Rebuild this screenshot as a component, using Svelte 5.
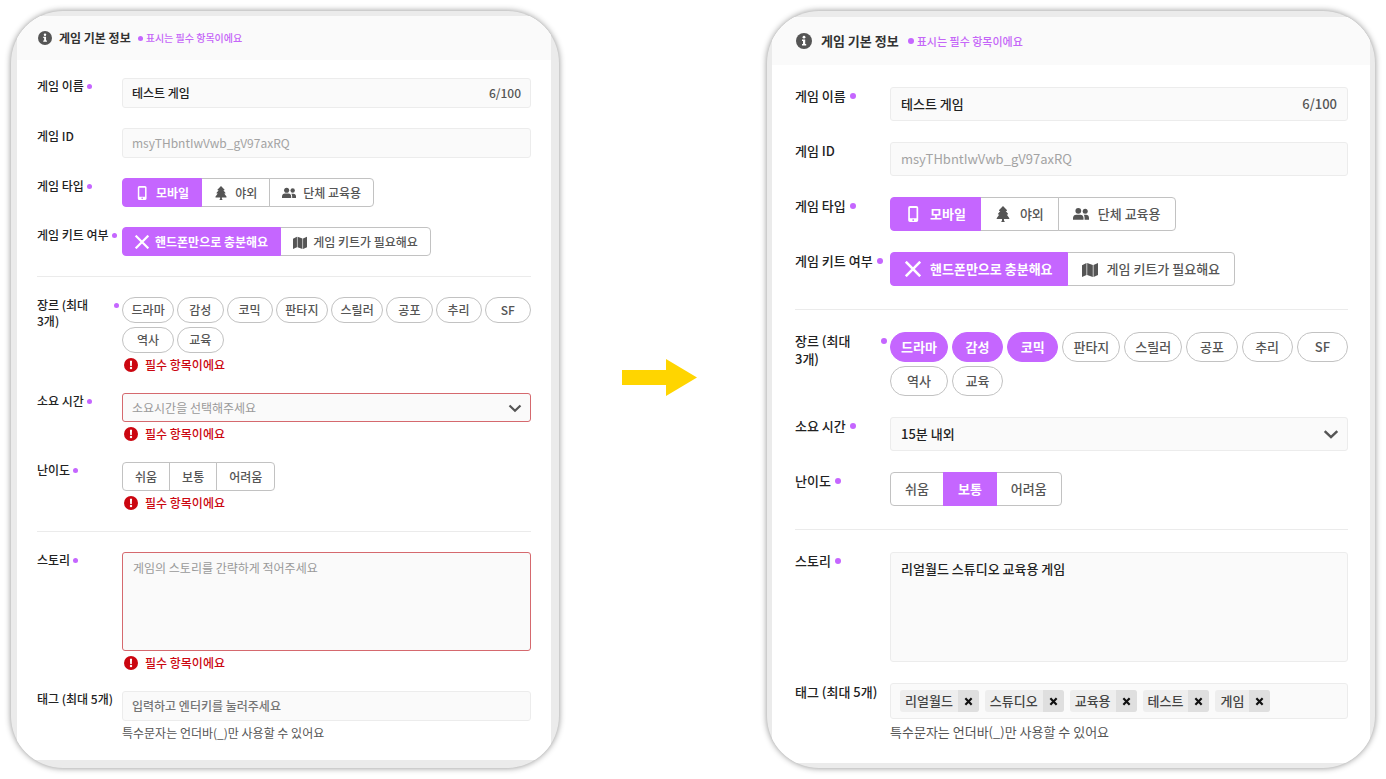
<script>
  const genres = ['드라마', '감성', '코믹', '판타지', '스릴러', '공포', '추리', 'SF', '역사', '교육'];
  const types = [
    { name: '모바일', icon: 'phone' },
    { name: '야외', icon: 'tree' },
    { name: '단체 교육용', icon: 'people' }
  ];
  const kits = [
    { name: '핸드폰만으로 충분해요', icon: 'cross' },
    { name: '게임 키트가 필요해요', icon: 'map' }
  ];
  const levels = [{ name: '쉬움' }, { name: '보통' }, { name: '어려움' }];

  let forms = $state([
    { id: 'empty', size: 'small', name: '테스트 게임', type: '모바일', kit: '핸드폰만으로 충분해요', genres: [], time: '', level: '', story: '', tags: [] },
    { id: 'filled', size: 'large', name: '테스트 게임', type: '모바일', kit: '핸드폰만으로 충분해요', genres: ['드라마', '감성', '코믹'], time: '15', level: '보통', story: '리얼월드 스튜디오 교육용 게임', tags: ['리얼월드', '스튜디오', '교육용', '테스트', '게임'] }
  ]);

  function toggleGenre(form, genre) {
    if (form.genres.includes(genre)) form.genres = form.genres.filter((g) => g !== genre);
    else if (form.genres.length < 3) form.genres = [...form.genres, genre];
  }

  function addTag(event, form) {
    const value = event.target.value.trim();
    if (event.key !== 'Enter' || !value || form.tags.length >= 5) return;
    event.preventDefault();
    form.tags = [...form.tags, value];
    event.target.value = '';
  }
</script>

{#snippet icon(name)}
  {#if name === 'phone'}
    <svg class="icon" viewBox="0 0 16 16" aria-hidden="true">
      <path fill="currentColor" fill-rule="evenodd" d="M5 0h6.400a1.800 1.800 0 0 1 1.800 1.800v12.400a1.800 1.800 0 0 1-1.800 1.800H5a1.800 1.800 0 0 1-1.800-1.800V1.800A1.800 1.800 0 0 1 5 0zM4.900 1.900v10.300h6.600V1.900zM8.200 13.200a.9.9 0 1 0 0 1.800.9.9 0 0 0 0-1.800z" />
    </svg>
  {:else if name === 'tree'}
    <svg class="icon" viewBox="0 0 16 16" aria-hidden="true">
      <path fill="currentColor" d="M8 0l3.900 4.100c.3.400.1.800-.4.800h-.8l2.300 2.800c.3.400.1.900-.4.900h-.9l2.500 3.300c.4.500.1 1.100-.5 1.100H9v1.500l.9 1.500H6.100l.9-1.500V13H2.300c-.6 0-.9-.6-.5-1.100l2.500-3.300h-.9c-.5 0-.7-.5-.4-.9l2.300-2.800h-.8c-.5 0-.7-.4-.4-.8z" />
    </svg>
  {:else if name === 'people'}
    <svg class="icon" viewBox="0 0 16 16" aria-hidden="true">
      <g fill="currentColor">
        <circle cx="5.300" cy="4.800" r="2.900" />
        <path d="M0 13.700V12C0 9.900 1.500 8.700 3.300 8.700h4c1.800 0 3.200 1.200 3.200 3.300v1.700z" />
        <circle cx="12.200" cy="5.200" r="2.500" />
        <path d="M11.600 13.700H16V12c0-2.100-1.300-3.200-2.900-3.200h-2.400c.6.700.9 1.900.9 3.200z" />
      </g>
    </svg>
  {:else if name === 'cross'}
    <svg class="icon" viewBox="0 0 16 16" aria-hidden="true">
      <path fill="none" stroke="currentColor" stroke-width="2.600" stroke-linecap="square" d="M1.700 1.700l12.600 12.600M14.300 1.700L1.700 14.300" />
    </svg>
  {:else if name === 'map'}
    <svg class="icon" viewBox="0 0 16 16" aria-hidden="true">
      <path fill="currentColor" d="M0 4.200L4.500 2v12L0 16zM5.200 2l5.600 2v12l-5.600-2zM11.500 4L16 2v12l-4.500 2z" />
    </svg>
  {/if}
{/snippet}

{#snippet error()}
  <p class="error">
    <svg viewBox="0 0 14 14" aria-hidden="true">
      <circle cx="7" cy="7" r="7" fill="#cb0610" />
      <path d="M5.900 2.800h2.200l-.3 5.200H6.200z" fill="#fff" />
      <circle cx="7" cy="10" r="1.200" fill="#fff" />
    </svg>
    필수 항목이에요
  </p>
{/snippet}

{#snippet segments(form, key, items, label)}
  <div class="segments {key}" role="group" aria-label={label}>
    {#each items as item}
      <button type="button" class:active={form[key] === item.name} aria-pressed={form[key] === item.name} onclick={() => (form[key] = item.name)}>
        {#if item.icon}{@render icon(item.icon)}{/if}{item.name}
      </button>
    {/each}
  </div>
{/snippet}

{#snippet panel(form)}
  <section class="panel {form.size}">
    <form class="sheet" onsubmit={(e) => e.preventDefault()}>
      <header>
        <svg class="info" viewBox="0 0 16 16" aria-hidden="true">
          <circle cx="8" cy="8" r="8" fill="#555" />
          <circle cx="8" cy="4.200" r="1.400" fill="#fff" />
          <path d="M6 6.600h3.200v4.300h1v1.500H6v-1.500h1V8.100H6z" fill="#fff" />
        </svg>
        <h2>게임 기본 정보</h2>
        <p class="legend"><i class="dot"></i>표시는 필수 항목이에요</p>
      </header>

      <div class="rows">
        <div class="row">
          <label class="label" for="{form.id}-name"><span>게임 이름</span><i class="dot"></i></label>
          <div class="field">
            <input id="{form.id}-name" type="text" maxlength="100" bind:value={form.name} />
            <span class="count">{form.name.length}/100</span>
          </div>
        </div>
        <div class="row">
          <label class="label" for="{form.id}-code"><span>게임 ID</span></label>
          <div class="field">
            <input id="{form.id}-code" class="muted" type="text" readonly value="msyTHbntIwVwb_gV97axRQ" />
          </div>
        </div>
        <div class="row">
          <div class="label"><span>게임 타입</span><i class="dot"></i></div>
          {@render segments(form, 'type', types, '게임 타입')}
        </div>
        <div class="row">
          <div class="label"><span>게임 키트 여부</span><i class="dot"></i></div>
          {@render segments(form, 'kit', kits, '게임 키트 여부')}
        </div>

        <hr />

        <div class="row">
          <div class="label"><span>장르 (최대 3개)</span><i class="dot"></i></div>
          <div>
            <div class="chips" role="group" aria-label="장르">
              {#each genres as genre}
                <button type="button" class:active={form.genres.includes(genre)} aria-pressed={form.genres.includes(genre)} onclick={() => toggleGenre(form, genre)}>{genre}</button>
              {/each}
            </div>
            {#if !form.genres.length}{@render error()}{/if}
          </div>
        </div>
        <div class="row">
          <label class="label" for="{form.id}-time"><span>소요 시간</span><i class="dot"></i></label>
          <div>
            <div class="select">
              <select id="{form.id}-time" class:invalid={!form.time} bind:value={form.time}>
                <option value="" disabled hidden>소요시간을 선택해주세요</option>
                <option value="15">15분 내외</option>
              </select>
              <svg viewBox="0 0 14 14" aria-hidden="true">
                <path d="M1.500 4.500L7 9.700l5.500-5.200" fill="none" stroke="#555" stroke-width="2.200" />
              </svg>
            </div>
            {#if !form.time}{@render error()}{/if}
          </div>
        </div>
        <div class="row">
          <div class="label"><span>난이도</span><i class="dot"></i></div>
          <div>
            {@render segments(form, 'level', levels, '난이도')}
            {#if !form.level}{@render error()}{/if}
          </div>
        </div>

        <hr />

        <div class="row">
          <label class="label" for="{form.id}-story"><span>스토리</span><i class="dot"></i></label>
          <div>
            <textarea id="{form.id}-story" class:invalid={!form.story} placeholder="게임의 스토리를 간략하게 적어주세요" bind:value={form.story}></textarea>
            {#if !form.story}{@render error()}{/if}
          </div>
        </div>
        <div class="row">
          <label class="label" for="{form.id}-tag"><span>태그 (최대 5개)</span></label>
          <div>
            <div class="field tags" class:filled={form.tags.length}>
              {#each form.tags as tag}
                <span class="tag">
                  {tag}
                  <button type="button" aria-label="삭제" onclick={() => (form.tags = form.tags.filter((t) => t !== tag))}>
                    <svg viewBox="0 0 10 10" aria-hidden="true"><path d="M1.500 1.500l7 7M8.500 1.500l-7 7" stroke="#111" stroke-width="2.400" /></svg>
                  </button>
                </span>
              {/each}
              <input id="{form.id}-tag" type="text" placeholder={form.tags.length ? '' : '입력하고 엔터키를 눌러주세요'} onkeydown={(e) => addTag(e, form)} />
            </div>
            <p class="help">특수문자는 언더바(_)만 사용할 수 있어요</p>
          </div>
        </div>
      </div>
    </form>
  </section>
{/snippet}

<main>
  {@render panel(forms[0])}
  <div class="arrow">
    <svg viewBox="0 0 75 37" aria-hidden="true"><path d="M0 11h44V0l31 18.500L44 37V26H0z" fill="#ffd500" /></svg>
  </div>
  {@render panel(forms[1])}
</main>

<style>
  :global(body) {
    margin: 0;
    background: #fff;
  }

  main {
    display: grid;
    grid-template-columns: 548fr 208px 608fr;
    box-sizing: border-box;
    min-height: 100vh;
    padding: 11px;
    font-family: "Noto Sans CJK KR", "Noto Sans", sans-serif;
    font-weight: 500;
    color: #222;
  }

  h2, p, hr {
    margin: 0;
  }

  button, input, select, textarea {
    box-sizing: border-box;
    margin: 0;
    font: inherit;
    color: inherit;
  }

  button {
    cursor: pointer;
  }

  .panel {
    display: flex;
    box-sizing: border-box;
    overflow: hidden;
    border-radius: 52px;
    background: #ebebeb;
    box-shadow: 0 0 6px rgba(0, 0, 0, 0.45);
  }

  .small {
    --text: 12px;
    --legend: 10px;
    --line: 16px;
    --label: 85px;
    --gap: 20px;
    --field: 30px;
    --control: 29px;
    --chip: 26px;
    --chip-gap: 3px;
    --story: 99px;
    --left: 20px;
    --right: 20px;
    --head: 44px;
    --head-left: 21px;
    --top: 18px;
    --icon: 14px;
    --space: 7px;
    --dot: 5px;
    --dot-gap: 3px;
    --pad: 12px;
    --inset: 9px;
    --tag-field: 30px;
    padding: 5px 8px 8px 6px;
  }

  .large {
    --text: 13px;
    --legend: 11px;
    --line: 18px;
    --label: 95px;
    --gap: 21px;
    --field: 34px;
    --control: 34px;
    --chip: 30px;
    --chip-gap: 4px;
    --story: 110px;
    --left: 23px;
    --right: 22px;
    --head: 48px;
    --head-left: 24px;
    --top: 22px;
    --icon: 16px;
    --space: 9px;
    --dot: 6px;
    --dot-gap: 4px;
    --pad: 14px;
    --inset: 10px;
    --tag-field: 36px;
    padding: 6px 5px 5px 5px;
  }

  .sheet {
    flex: 1;
    min-width: 0;
    background: #fff;
    font-size: var(--text);
    line-height: var(--line);
  }

  header {
    display: flex;
    align-items: center;
    gap: var(--space);
    height: var(--head);
    padding-left: var(--head-left);
    background: #fafafa;
  }

  .info {
    width: var(--icon);
    height: var(--icon);
  }

  h2 {
    font-size: var(--text);
    font-weight: 700;
    color: #333;
  }

  .legend {
    display: flex;
    align-items: center;
    gap: 3px;
    font-size: var(--legend);
    color: #c566f8;
  }

  .dot {
    flex: none;
    width: var(--dot);
    height: var(--dot);
    border-radius: 50%;
    background: #c566ff;
  }

  .rows {
    display: flex;
    flex-direction: column;
    gap: var(--gap);
    padding: var(--top) var(--right) var(--top) var(--left);
  }

  .row {
    display: grid;
    grid-template-columns: var(--label) 1fr;
    align-items: start;
  }

  .label {
    display: flex;
    gap: var(--dot-gap);
    padding-right: 3px;
    word-break: keep-all;
  }

  .label .dot {
    margin-top: 6px;
  }

  hr {
    height: 1px;
    border: 0;
    background: #ebebeb;
  }

  .large hr {
    margin: 2px 0 1px;
  }

  .field {
    display: flex;
    align-items: center;
    box-sizing: border-box;
    height: var(--field);
    padding: 0 var(--inset);
    border: 1px solid #ececec;
    border-radius: 3px;
    background: #fafafa;
  }

  .field input {
    flex: 1;
    min-width: 0;
    padding: 0;
    border: 0;
    outline: 0;
    background: none;
  }

  .field .muted {
    color: #a3a3a3;
    font-weight: 400;
  }

  .count {
    color: #555;
  }

  .segments {
    display: flex;
  }

  .segments button {
    display: flex;
    align-items: center;
    gap: var(--space);
    height: var(--control);
    padding: 0 var(--pad);
    border: 1px solid #c2c2c2;
    background: #fff;
    color: #555;
    white-space: nowrap;
  }

  .small .kit button {
    gap: 6px;
  }

  .segments button + button {
    margin-left: -1px;
  }

  .segments button:first-child {
    border-radius: 4px 0 0 4px;
  }

  .segments button:last-child {
    border-radius: 0 4px 4px 0;
  }

  .segments .active {
    position: relative;
  }

  .segments .active, .chips .active {
    border-color: #c566ff;
    background: #c566ff;
    color: #fff;
    font-weight: 700;
  }

  .icon {
    width: var(--icon);
    height: var(--icon);
  }

  .chips {
    display: grid;
    grid-template-columns: 52fr 46fr 46fr 52fr 52fr 46fr 46fr 46fr;
    gap: 4px var(--chip-gap);
  }

  .chips button {
    height: var(--chip);
    padding: 0;
    border: 1px solid #c2c2c2;
    border-radius: 15px;
    background: #fff;
    color: #555;
    white-space: nowrap;
  }

  .error {
    display: flex;
    align-items: center;
    gap: 7px;
    height: 17px;
    padding: 3px 0 0 2px;
    color: #cb0610;
  }

  .error svg {
    width: 14px;
    height: 14px;
  }

  .select {
    position: relative;
  }

  .select svg {
    position: absolute;
    top: 50%;
    right: 9px;
    width: var(--icon);
    height: var(--icon);
    transform: translateY(-50%);
    pointer-events: none;
  }

  select, textarea {
    display: block;
    width: 100%;
    border: 1px solid #ececec;
    border-radius: 3px;
    outline: 0;
    background: #fafafa;
  }

  select {
    height: var(--control);
    padding: 0 30px 0 var(--inset);
    appearance: none;
  }

  textarea {
    height: var(--story);
    padding: 7px 10px;
    resize: none;
  }

  .invalid {
    border-color: #d5696e;
  }

  select.invalid {
    color: #999;
    font-weight: 400;
  }

  textarea::placeholder {
    color: #999;
    font-weight: 400;
  }

  .tags {
    height: var(--tag-field);
  }

  .tags input::placeholder {
    color: #757575;
    opacity: 1;
  }

  .filled {
    gap: 6px;
    padding: 0 9px;
  }

  .tag {
    display: flex;
    align-items: center;
    gap: 5px;
    height: 22px;
    padding-left: 5px;
    border-radius: 3px;
    overflow: hidden;
    background: #eee;
    color: #444;
  }

  .tag button {
    display: grid;
    place-items: center;
    width: 21px;
    height: 22px;
    padding: 0;
    border: 0;
    background: #dfdfdf;
  }

  .tag svg {
    width: 9px;
    height: 9px;
  }

  .help {
    padding-top: 4px;
    color: #555;
    font-weight: 400;
  }

  .arrow {
    display: grid;
    place-items: center;
    padding: 0 7px 24px 0;
  }

  .arrow svg {
    width: 75px;
    height: 37px;
  }
</style>
